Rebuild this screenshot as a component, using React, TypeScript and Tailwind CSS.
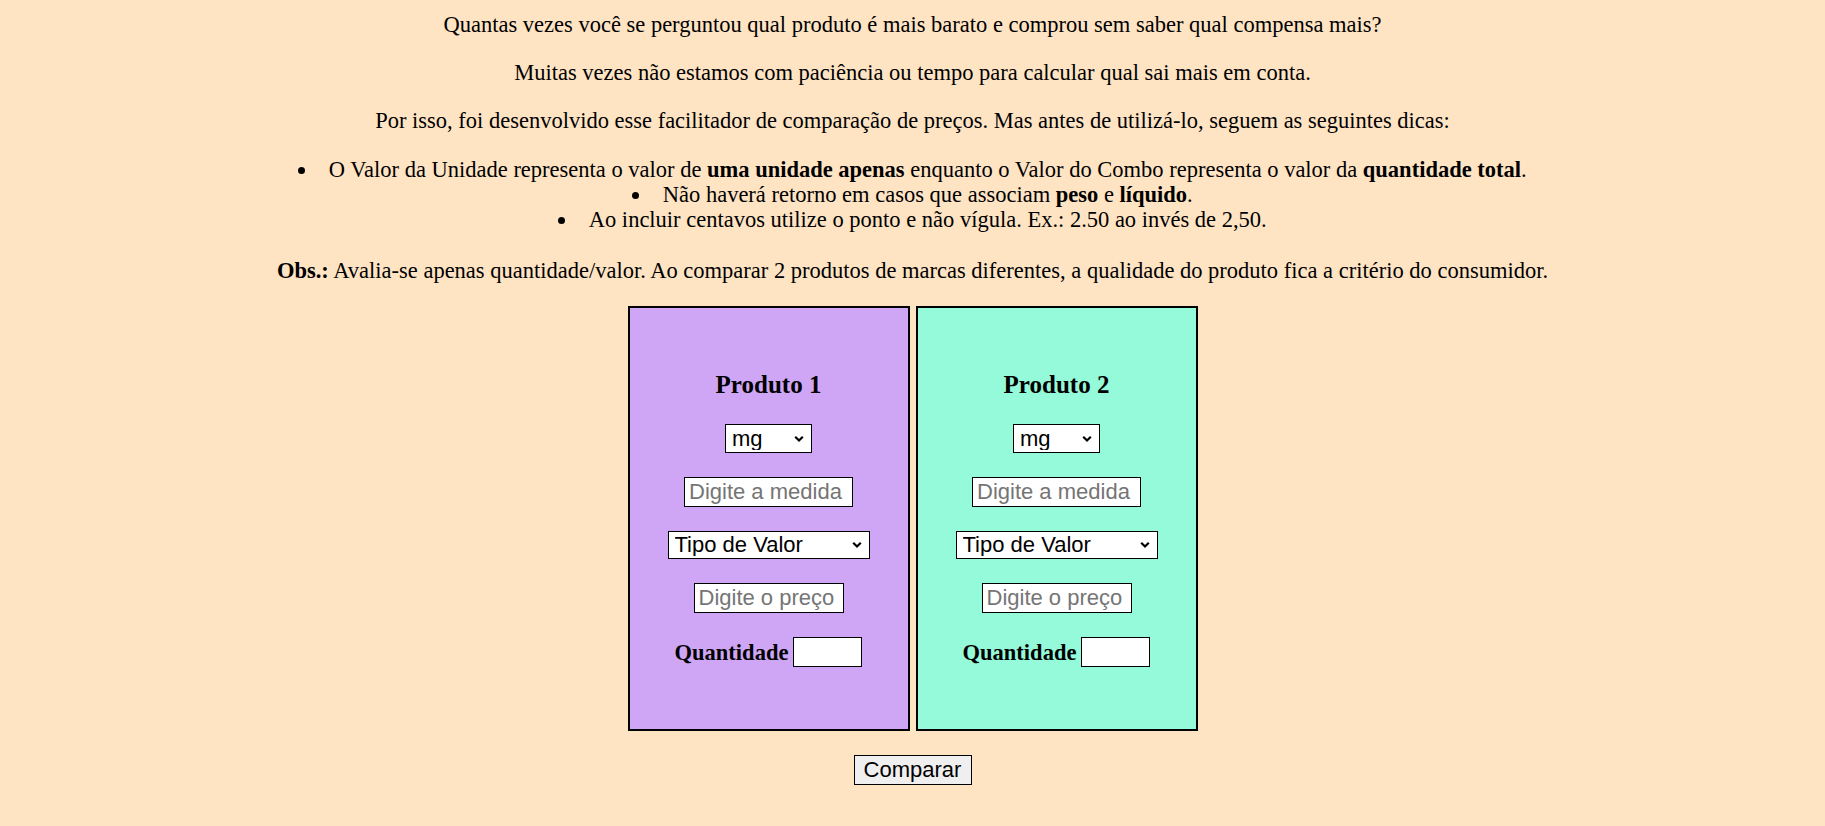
import React from 'react';

const sans = "font-['Liberation_Sans',Arial,sans-serif]";

function Select({ width, height, options }: { width: string; height: string; options: string[] }) {
    return (
        <div className={`relative mt-[24px] ${width} ${height}`}>
            <select className={`appearance-none w-full h-full bg-white border border-black text-[22px] leading-none text-black pl-[6px] pr-[20px] ${sans}`}>
                {options.map(o => <option key={o}>{o}</option>)}
            </select>
            <svg className="absolute right-[8px] top-1/2 -translate-y-1/2 pointer-events-none" width="10" height="7" viewBox="0 0 10 7">
                <polyline points="1.2,1.2 5,5 8.8,1.2" fill="none" stroke="#000" strokeWidth="2.2" />
            </svg>
        </div>
    );
}

function ProductCard({ title, color }: { title: string; color: string }) {
    return (
        <div className={`w-[282px] h-[425px] border-2 border-black ${color} flex flex-col items-center pt-[62px]`}>
            <h3 className="text-[25px] leading-[30px] font-bold">{title}</h3>
            <Select width="w-[87px]" height="h-[29px]" options={['mg', 'g', 'kg', 'ml', 'L']} />
            <input
                type="text"
                placeholder="Digite a medida"
                className={`mt-[24px] w-[169px] h-[30px] bg-white border border-black text-[22px] px-[4px] placeholder:text-[#757575] ${sans}`}
            />
            <Select width="w-[202px]" height="h-[28px]" options={['Tipo de Valor', 'Valor da Unidade', 'Valor do Combo']} />
            <input
                type="text"
                placeholder="Digite o preço"
                className={`mt-[24px] w-[150px] h-[30px] bg-white border border-black text-[22px] px-[4px] placeholder:text-[#757575] ${sans}`}
            />
            <div className="mt-[24px] flex items-center gap-[5px]">
                <label className="font-bold text-[22.5px]">Quantidade</label>
                <input type="text" className={`w-[69px] h-[30px] bg-white border border-black text-[22px] px-[4px] ${sans}`} />
            </div>
        </div>
    );
}

export default function App() {
    return (
        <div className="min-h-screen bg-[#ffe4c4] text-black text-center text-[22.5px] leading-[25px] font-['Liberation_Serif','Times_New_Roman',serif] pt-[12px] pb-[40px]">
            <p>Quantas vezes você se perguntou qual produto é mais barato e comprou sem saber qual compensa mais?</p>
            <p className="mt-[23px]">Muitas vezes não estamos com paciência ou tempo para calcular qual sai mais em conta.</p>
            <p className="mt-[23px]">Por isso, foi desenvolvido esse facilitador de comparação de preços. Mas antes de utilizá-lo, seguem as seguintes dicas:</p>
            <ul className="mt-[24px] list-disc list-inside">
                <li>O Valor da Unidade representa o valor de <b>uma unidade apenas</b> enquanto o Valor do Combo representa o valor da <b>quantidade total</b>.</li>
                <li>Não haverá retorno em casos que associam <b>peso</b> e <b>líquido</b>.</li>
                <li>Ao incluir centavos utilize o ponto e não vígula. Ex.: 2.50 ao invés de 2,50.</li>
            </ul>
            <p className="mt-[26px]"><b>Obs.:</b> Avalia-se apenas quantidade/valor. Ao comparar 2 produtos de marcas diferentes, a qualidade do produto fica a critério do consumidor.</p>

            <div className="mt-[23px] flex justify-center gap-[6px]">
                <ProductCard title="Produto 1" color="bg-[#cfa5f5]" />
                <ProductCard title="Produto 2" color="bg-[#95fad9]" />
            </div>

            <button className={`mt-[24px] w-[118px] h-[30px] bg-[#efefef] border border-black text-[22px] leading-none ${sans}`}>
                Comparar
            </button>
        </div>
    );
}
